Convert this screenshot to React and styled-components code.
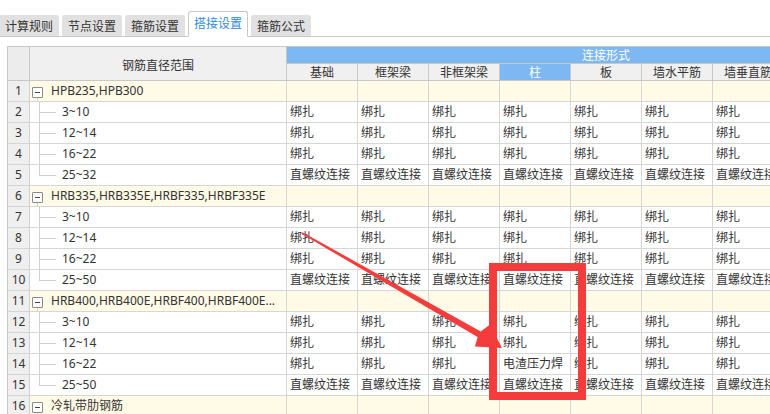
import React from 'react';
import styled, { createGlobalStyle } from 'styled-components';

const GlobalStyle = createGlobalStyle`
  html, body {
    margin: 0;
    padding: 0;
    background: #fff;
    overflow: hidden;
  }
  body {
    font-family: "Noto Sans", "Noto Sans CJK SC", sans-serif;
    font-size: 12px;
    color: #333;
  }
`;

const Page = styled.div`
  position: relative;
  width: 770px;
  height: 414px;
  overflow: hidden;
`;

const TabBar = styled.div`
  display: flex;
  align-items: flex-end;
  gap: 3px;
  height: 36px;
  margin-left: -1px;
  border-bottom: 1px solid #c8c8c8;
`;

const Tab = styled.div`
  box-sizing: border-box;
  height: ${({ $active }) => ($active ? '26px' : '21px')};
  margin-bottom: ${({ $active }) => ($active ? '-1px' : '0')};
  padding: 0 5px;
  line-height: ${({ $active }) => ($active ? '24px' : '21px')};
  white-space: nowrap;
  background: ${({ $active }) => ($active ? '#fff' : '#e1e1e1')};
  color: ${({ $active }) => ($active ? '#2f8be2' : '#333')};
  border: 1px solid ${({ $active }) => ($active ? '#c8c8c8' : '#e1e1e1')};
  border-bottom: ${({ $active }) => ($active ? '1px solid #fff' : '0')};
  border-radius: 3px 3px 0 0;
`;

const TableWrap = styled.div`
  margin: 9px 0 0 7px;
  border-top: 1px solid #c8c8c8;
  border-left: 1px solid #c8c8c8;
  width: max-content;
`;

const Grid = styled.div`
  display: grid;
  grid-template-columns: 22px 257px repeat(9, 71px);
  grid-template-rows: 17px 17px;
  grid-auto-rows: 21px;
`;

const Cell = styled.div`
  box-sizing: border-box;
  border-right: 1px solid #d6d6d6;
  border-bottom: 1px solid #d6d6d6;
  line-height: 20px;
  padding-left: 3px;
  white-space: nowrap;
  overflow: hidden;
  background: ${({ $group }) => ($group ? '#fffbe6' : '#fff')};
`;

const HeadCell = styled.div`
  box-sizing: border-box;
  display: flex;
  align-items: center;
  justify-content: center;
  border-right: 1px solid #c8c8c8;
  border-bottom: 1px solid #c8c8c8;
  white-space: nowrap;
  overflow: hidden;
  background: ${({ $blue }) => ($blue ? '#7db8f3' : '#f0f0f0')};
  color: ${({ $blue }) => ($blue ? '#fff' : '#333')};
  grid-row: ${({ $rows }) => ($rows ? `span ${$rows}` : 'auto')};
  grid-column: ${({ $cols }) => ($cols ? `span ${$cols}` : 'auto')};
`;

const CornerCell = styled(HeadCell)`
  background: #ececec;
`;

const TitleHead = styled(HeadCell)`
  padding-top: 3px;
`;

const RowNum = styled.div`
  box-sizing: border-box;
  border-right: 1px solid #d0d0d0;
  border-bottom: 1px solid #d6d6d6;
  background: #efefef;
  text-align: center;
  line-height: 20px;
  color: #333;
`;

const NameCell = styled(Cell)`
  display: flex;
  align-items: center;
  padding-left: ${({ $group }) => ($group ? '2px' : '9px')};
`;

const Toggle = styled.span`
  position: relative;
  box-sizing: border-box;
  width: 11px;
  height: 11px;
  margin: 2px 8px 0 0;
  border: 1px solid #8a8a8a;
  border-radius: 1px;
  background: #fff;
  flex: none;

  &::before {
    content: '';
    position: absolute;
    left: 2px;
    right: 2px;
    top: 4px;
    height: 1px;
    background: #444;
  }

  &::after {
    content: '';
    position: absolute;
    left: 4px;
    top: 10px;
    width: 1px;
    height: 6px;
    background: #d0d0d0;
  }
`;

const Guide = styled.span`
  position: relative;
  align-self: stretch;
  width: 17px;
  margin-right: 6px;
  flex: none;

  &::before {
    content: '';
    position: absolute;
    left: 0;
    top: 0;
    width: 1px;
    height: ${({ $last }) => ($last ? '50%' : '100%')};
    background: #d0d0d0;
  }

  &::after {
    content: '';
    position: absolute;
    left: 0;
    right: 0;
    top: 50%;
    height: 1px;
    background: #d0d0d0;
  }
`;

const Overlay = styled.svg`
  position: absolute;
  left: 0;
  top: 0;
  pointer-events: none;
`;

const tabs = ['计算规则', '节点设置', '箍筋设置', '搭接设置', '箍筋公式'];
const columns = ['基础', '框架梁', '非框架梁', '柱', '板', '墙水平筋', '墙垂直筋', '砌体加筋', '其它'];
const SELECTED = 3;

const fill = (v, extra = {}) => columns.map((_, i) => (i in extra ? extra[i] : v));

const groups = [
  {
    name: 'HPB235,HPB300',
    items: [
      ['3~10', fill('绑扎')],
      ['12~14', fill('绑扎')],
      ['16~22', fill('绑扎')],
      ['25~32', fill('直螺纹连接')],
    ],
  },
  {
    name: 'HRB335,HRB335E,HRBF335,HRBF335E',
    items: [
      ['3~10', fill('绑扎')],
      ['12~14', fill('绑扎')],
      ['16~22', fill('绑扎')],
      ['25~50', fill('直螺纹连接')],
    ],
  },
  {
    name: 'HRB400,HRB400E,HRBF400,HRBF400E...',
    items: [
      ['3~10', fill('绑扎')],
      ['12~14', fill('绑扎')],
      ['16~22', fill('绑扎', { 3: '电渣压力焊' })],
      ['25~50', fill('直螺纹连接')],
    ],
  },
  {
    name: '冷轧带肋钢筋',
    items: [['4~12', fill('绑扎')]],
  },
];

// red annotation drawn over the table
const Annotation = () => (
  <Overlay width="770" height="414" viewBox="0 0 770 414">
    <rect x="493" y="267" width="89" height="129" fill="none" stroke="#f43c3c" strokeWidth="8" />
    <polygon
      fill="#f43c3c"
      points="301.5,233.8 302.5,232.2 480.8,331.4 490,324.5 502,348 475,346.5 477.6,336.9"
    />
  </Overlay>
);

const App = () => {
  let n = 0;
  return (
    <Page>
      <GlobalStyle />
      <TabBar>
        {tabs.map((t) => (
          <Tab key={t} $active={t === '搭接设置'}>
            {t}
          </Tab>
        ))}
      </TabBar>
      <TableWrap>
        <Grid>
          <CornerCell $rows={2} />
          <TitleHead $rows={2}>钢筋直径范围</TitleHead>
          <HeadCell $blue $cols={columns.length}>连接形式</HeadCell>
          {columns.map((c, i) => (
            <HeadCell key={c} $blue={i === SELECTED}>
              {c}
            </HeadCell>
          ))}
          {groups.map((g) => {
            n += 1;
            const gNum = n;
            return (
              <React.Fragment key={g.name}>
                <RowNum>{gNum}</RowNum>
                <NameCell $group>
                  <Toggle />
                  {g.name}
                </NameCell>
                {columns.map((c) => (
                  <Cell key={c} $group />
                ))}
                {g.items.map(([range, vals], idx) => {
                  n += 1;
                  return (
                    <React.Fragment key={range}>
                      <RowNum>{n}</RowNum>
                      <NameCell>
                        <Guide $last={idx === g.items.length - 1} />
                        {range}
                      </NameCell>
                      {vals.map((v, i) => (
                        <Cell key={i}>{v}</Cell>
                      ))}
                    </React.Fragment>
                  );
                })}
              </React.Fragment>
            );
          })}
        </Grid>
      </TableWrap>
      <Annotation />
    </Page>
  );
};

export default App;
